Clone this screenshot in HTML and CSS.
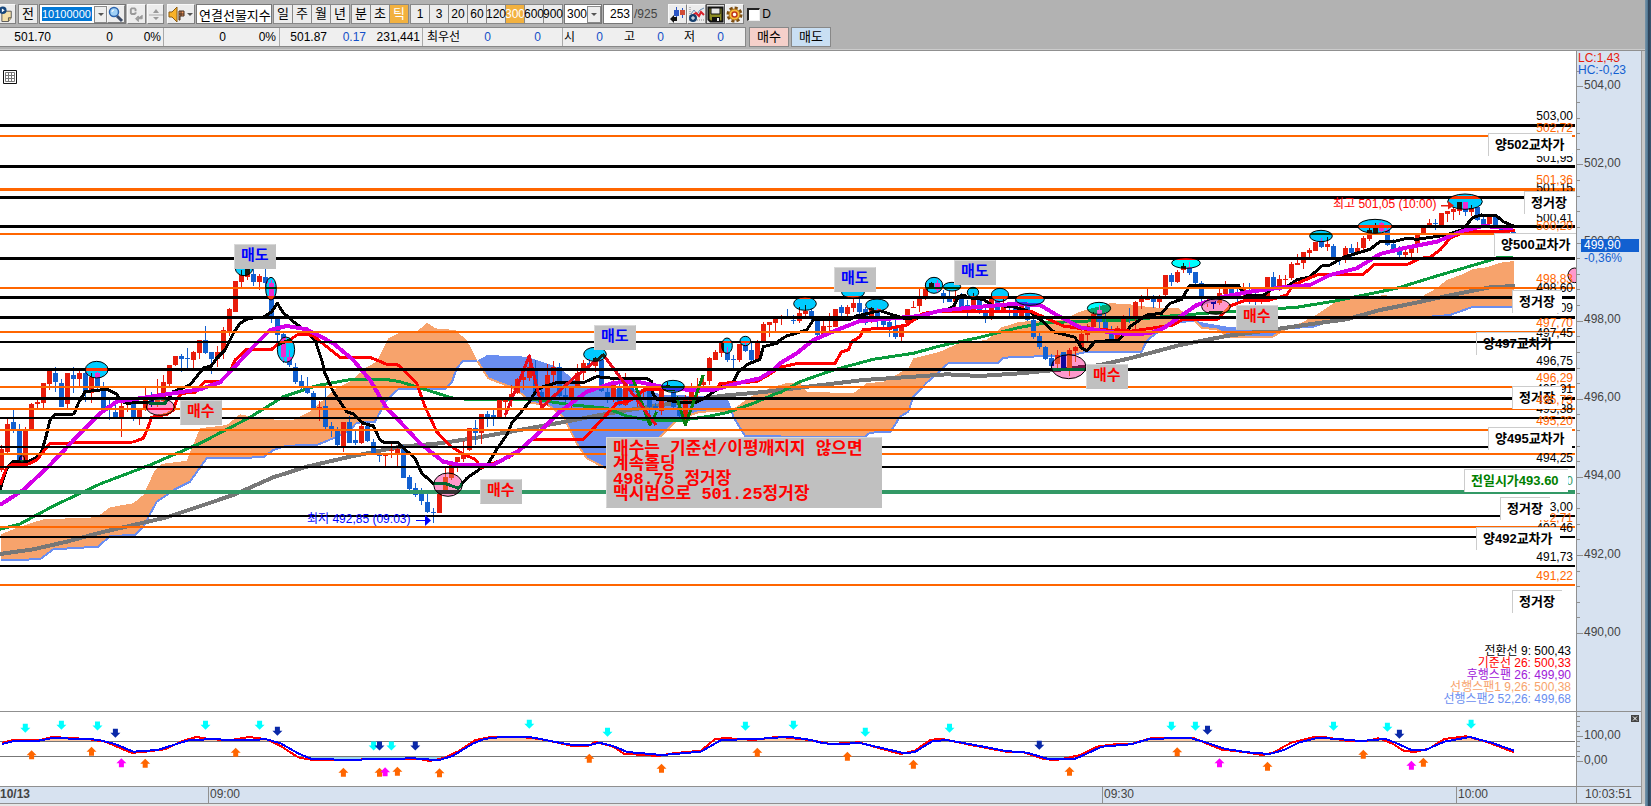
FILE: index.html
```html
<!DOCTYPE html>
<html lang="ko">
<head>
<meta charset="utf-8">
<title>연결선물지수 차트</title>
<link rel="stylesheet" href="styles.css">
</head>
<body>
<div class="app">
<main class="window">
  <div class="toolbar">
    <button class="tool note" type="button" aria-label="메모">
      <svg width="16" height="18" viewBox="0 0 16 18"><path d="M2 6h10v7l-3 4H2z" fill="#f4dfa8" stroke="#555"/><path d="M9 17v-4h3" fill="#d8b860" stroke="#555"/><circle cx="3" cy="5" r="4" fill="#17477d"/><path d="M2 3v4l3-2z" fill="#fff"/></svg>
    </button>
    <button class="tool prev" type="button">전</button>
    <div class="code-box">
      <input class="code" aria-label="종목코드" value="10100000">
      <button class="drop" type="button" aria-label="목록"></button>
      <button class="tool find" type="button" aria-label="검색">
        <svg width="16" height="17" viewBox="0 0 16 17"><path d="M9 10l5 5" stroke="#3b4a66" stroke-width="3"/><circle cx="6" cy="6" r="4.500" fill="#9fd0f6" stroke="#2a62ac" stroke-width="1.500"/><path d="M4 6a2 2 0 0 1 2-2" stroke="#fff" fill="none"/></svg>
      </button>
    </div>
    <button class="tool repeat" type="button" aria-label="되돌리기">
      <svg width="18" height="17" viewBox="0 0 18 17"><path d="M8 5V3L7 2H4L3 3v4l1 1h3l1-1V6" fill="none" stroke="#999" stroke-width="2"/><path d="M15 9v4H9M11 10l-3 3 3 3z" fill="#999" stroke="#999"/></svg>
    </button>
    <button class="tool spin" type="button" aria-label="이전 다음">
      <svg width="14" height="17" viewBox="0 0 14 17"><path d="M7 3l3 4H4zM7 14l3-3H4z" fill="#999"/><path d="M0 9h14" stroke="#aaa"/></svg>
    </button>
    <button class="tool sound" type="button" aria-label="소리">
      <svg width="26" height="17" viewBox="0 0 26 17"><path d="M1 6h3l5-5v15l-5-5H1z" fill="#f9b228" stroke="#8a5a13"/><path d="M11 5h5v5h-4v4h-1zM13 5v5M11 8h5" fill="#f19b62" stroke="#442c1c"/><path d="M19 7h6l-3 3z" fill="#555"/></svg>
    </button>
    <input class="name" aria-label="종목명" value="연결선물지수">
    <div class="group">
      <button type="button">일</button><button type="button">주</button><button type="button">월</button><button type="button">년</button>
    </div>
    <div class="group">
      <button type="button">분</button><button type="button">초</button><button class="on" type="button">틱</button>
    </div>
    <div class="group digits">
      <button type="button">1</button><button type="button">3</button><button type="button">20</button><button type="button">60</button><button type="button">120</button><button class="on" type="button">300</button><button type="button">600</button><button type="button">900</button>
    </div>
    <div class="tick-box">
      <select aria-label="틱 수"><option>300</option></select>
      <span class="drop"></span>
    </div>
    <div class="count"><input id="bars" aria-label="봉 개수" value="253"><label for="bars">/925</label></div>
    <div class="icons">
      <button class="tool" type="button" aria-label="봉 차트">
        <svg width="17" height="17" viewBox="0 0 17 17"><path d="M7.500 1v11M13.500 2v10" stroke="#2b55c5"/><path d="M5 4h5v6H5z" fill="#2b55c5"/><path d="M11 4h5v5h-5z" fill="#cf4b36"/><path d="M1 13l4-4v2h3v4H5v2z" fill="#111"/></svg>
      </button>
      <button class="tool" type="button" aria-label="지표 추가">
        <svg width="17" height="17" viewBox="0 0 17 17"><path d="M2 1v14M1 14h15" stroke="#888" stroke-dasharray="1 1"/><path d="M3 8l3-4 3 4 3-4 4-2" fill="none" stroke="#6b8fb5"/><path d="M5 9l3-2 3 3 2-4 3 3" fill="none" stroke="#d9202a" stroke-width="2"/><circle cx="5" cy="12" r="4" fill="#15406f"/><path d="M3 12h4M5 10v4" stroke="#fff"/></svg>
      </button>
      <button class="tool pressed" type="button" aria-label="저장">
        <svg width="17" height="17" viewBox="0 0 17 17"><path d="M1.500 1.500h14v14h-12l-2-2z" fill="#8b8b22" stroke="#111" stroke-width="2"/><path d="M4 2h9v6H4z" fill="#e8e8e8" stroke="#111"/><path d="M5 11h8v5H5z" fill="#111"/><path d="M10 12h2v3h-2z" fill="#eee"/></svg>
      </button>
      <button class="tool" type="button" aria-label="설정">
        <svg width="17" height="17" viewBox="0 0 17 17"><circle cx="8.500" cy="8.500" r="6.500" fill="none" stroke="#7a4c10" stroke-width="3" stroke-dasharray="3 2"/><circle cx="8.500" cy="8.500" r="5.500" fill="#f8bd38" stroke="#a86b18"/><circle cx="8.500" cy="8.500" r="2.500" fill="#fff" stroke="#c03a1e" stroke-width="1.500"/></svg>
      </button>
    </div>
    <label class="daily"><input type="checkbox">D</label>
  </div>

  <div class="quote-row">
    <div class="quotes">
      <div class="cells total"><span>501.70</span><span>0</span><span>0%</span></div>
      <div class="cells change"><span>0</span><span>0%</span></div>
      <div class="cells last"><span>501.87</span><span class="blue">0.17</span><span>231,441</span></div>
      <div class="cells best"><span>최우선</span><span class="blue">0</span><span class="blue">0</span></div>
      <div class="cells ohlc"><span>시</span><span class="blue">0</span><span>고</span><span class="blue">0</span><span>저</span><span class="blue">0</span></div>
    </div>
    <button class="order buy" type="button">매수</button>
    <button class="order sell" type="button">매도</button>
  </div>

  <section class="chart">
    <div class="plot" id="plot">
      <svg class="canvas" id="canvas" viewBox="0 51 1576 735" preserveAspectRatio="none" role="img" aria-label="연결선물지수 300틱 차트"></svg>
      <button class="grid-button" type="button" aria-label="표 보기">
        <svg width="14" height="14" viewBox="0 0 14 14"><path d="M.5.5h13v13H.5z" fill="#fff" stroke="#111"/><path d="M2.500 2.500h9v9h-9zM5.500 2v10M8.500 2v10M2 5.500h10M2 8.500h10" fill="none" stroke="#777"/></svg>
      </button>
      <ul class="legend">
        <li class="conv">전환선 9: 500,43</li>
        <li class="base">기준선 26: 500,33</li>
        <li class="lag">후행스팬 26: 499,90</li>
        <li class="span1">선행스팬1 9,26: 500,38</li>
        <li class="span2">선행스팬2 52,26: 499,68</li>
      </ul>
    </div>
    <div class="axis" id="axis">
      <button class="close" type="button" aria-label="닫기"><svg width="8" height="7" viewBox="0 0 8 7"><path d="M2 1.500l4 4M6 1.500l-4 4" stroke="#fff"/></svg></button>
    </div>
    <div class="times" id="times"></div>
    <div class="clock">10:03:51</div>
  </section>
  <div class="status"></div>
</main>
<div class="edge"></div>
</div>
<script src="chart.js"></script>
</body>
</html>
```

FILE: styles.css
```css
* { box-sizing: border-box; }

body {
  margin: 0;
  background: #b2b2b2;
  color: #000;
  font: 12px/16px "Liberation Sans", "Noto Sans CJK KR", sans-serif;
}

button, input, select {
  margin: 0;
  padding: 0;
  border: 0;
  border-radius: 0;
  color: inherit;
  font: inherit;
}

.app { display: flex; height: 100vh; overflow: hidden; }
.window { display: flex; flex: 1; flex-direction: column; min-width: 0; }
.edge { width: 6px; background: linear-gradient(90deg, #7894a8, #557c98 40%, #2b3f55 60%, #3a5873); }

/* toolbar */
.toolbar { display: flex; align-items: center; gap: 1px; height: 27px; padding-top: 1px; }
.toolbar > * { flex: none; }
.tool {
  display: flex;
  align-items: center;
  justify-content: center;
  height: 20px;
  background: #ececec;
  border: 1px solid #808080;
  border-top-color: #f8f8f8;
  border-left-color: #f8f8f8;
}
.note { width: 16px; margin-right: 1px; border-left: 0; }
.prev { width: 20px; border-color: #888; font-size: 13px; }
.code-box { display: flex; align-items: center; width: 87px; height: 20px; padding-left: 2px; background: #fff; border: 1px solid #777; }
.code { width: 50px; height: 14px; margin-right: 2px; background: #0078d7; color: #fff; font-size: 11px; }
.drop { display: flex; align-items: center; justify-content: center; width: 14px; height: 17px; background: #eee; border: 1px solid #888; }
.drop::after { content: ""; border: 3px solid transparent; border-top-color: #555; border-bottom: 0; }
.find { width: 18px; height: 18px; }
.repeat { width: 19px; }
.spin { width: 17px; margin-right: 2px; }
.sound { width: 28px; }
.name { width: 76px; height: 20px; padding-left: 2px; background: #fff; border: 1px solid #777; font-size: 13px; }
.group { display: flex; height: 20px; border: 1px solid #888; font-size: 13px; }
.group.digits { font-size: 12px; }
.group button { display: flex; align-items: center; justify-content: center; width: 19px; background: #ececec; border-right: 1px solid #888; }
.group button:last-child { width: 18px; border-right: 0; }
.group .on { background: #f2b13f; color: #fff; }
.tick-box, .count { display: flex; align-items: center; height: 20px; }
.tick-box { width: 38px; background: #fff; border: 1px solid #777; }
.tick-box select { width: 22px; padding-left: 2px; background: #fff; appearance: none; }
.count input { width: 30px; height: 20px; padding-right: 2px; background: #fff; border: 1px solid #777; text-align: right; }
.count label { padding-left: 1px; color: #444; }
.icons { display: flex; margin-left: 10px; }
.icons .tool { width: 19px; }
.icons .pressed { background: #ddd; border-color: #555; }
.daily { display: flex; align-items: center; gap: 2px; margin-left: 2px; }
.daily input { width: 13px; height: 13px; background: #fff; border: 1px solid #eee; border-top: 2px solid #222; border-left: 2px solid #222; appearance: none; }

/* quote row */
.quote-row { display: flex; gap: 2px; height: 24px; padding-bottom: 4px; border-bottom: 1px solid #909090; box-shadow: inset 0 -1px #ccc; }
.quotes { display: flex; height: 20px; background: #efefef; border: 1px solid #888; border-left: 0; }
.cells { display: grid; align-items: center; text-align: right; border-right: 1px solid #aaa; }
.cells:last-child { border-right: 0; }
.total { grid-template-columns: 51px 62px 48px 2px; }
.change { grid-template-columns: 62px 50px 3px; }
.last { grid-template-columns: 47px 39px 54px 2px; }
.best { grid-template-columns: 37px 31px 50px 21px; }
.ohlc { grid-template-columns: 12px 28px 32px 29px 31px 29px 21px; }
.blue { color: #1450c8; }
.order { width: 40px; height: 20px; border: 1px solid #888; font-size: 13px; }
.buy { margin-left: 1px; background: #f5d0ca; }
.sell { background: #c9dff3; }

/* chart */
.chart {
  display: grid;
  flex: 1;
  grid-template: 1fr 18px / 1fr 65px;
  min-height: 0;
  margin-right: 4px;
  background: #d7e2f0;
  box-shadow: 1px 0 #999, 4px 0 #c8c8c8;
}
.plot, .axis, .times { position: relative; min-width: 0; min-height: 0; }
.plot { overflow: hidden; background: #fff; }
.canvas { position: absolute; inset: 0; width: 100%; height: 100%; isolation: isolate; }
.grid-button { position: absolute; top: 19px; left: 3px; width: 14px; height: 14px; }
.grid-button svg, .close svg { display: block; }
.axis { border-left: 1px solid #909090; }
.times { border-top: 1px solid #909090; border-bottom: 1px solid #909090; color: #444; }
.clock { padding-left: 8px; border: 1px solid #909090; border-right: 0; color: #444; line-height: 15px; }
.status { height: 2px; background: #e6e6e6; }

.price { position: absolute; right: 3px; margin-top: -8px; }
.orange { color: #ff6600; }
.green { color: #339966; }
.black { color: #000; }

.callout { position: absolute; height: 23px; padding: 3px 0 0 6px; background: #fff; border-top: 1px solid #ccc; border-left: 1px solid #ccc; font-weight: bold; font-size: 13px; white-space: nowrap; }
.callout.clear { background: none; }
.callout.open { color: #008000; }

.memo { position: absolute; padding: 3px 6px; background: #c0c0c0; border: 1px solid #d8d8d8; border-right-color: #c0c0c0; border-bottom-color: #c0c0c0; font: bold 15px/17px "Liberation Mono", "Noto Sans CJK KR", monospace; white-space: pre; }
.memo.buy-note { color: #ff0000; }
.memo.sell-note { color: #0000ff; }
.memo.long { width: 276px; height: 71px; padding: 4px 6px; color: #ff0000; font-size: 17px; line-height: 15px; }

.extreme { position: absolute; margin-top: -8px; white-space: nowrap; }
.extreme.high { color: #ff0000; }
.extreme.low { color: #0000ff; }

.legend { position: absolute; right: 5px; bottom: 81px; margin: 0; padding: 0; list-style: none; text-align: right; line-height: 12px; }
.base { color: #ff0000; }
.lag { color: #a020d8; }
.span1 { color: #f7a36c; }
.span2 { color: #6a8ef0; }

.tick { position: absolute; left: 0; width: 3px; height: 1px; background: #909090; }
.tick.major { width: 6px; }
.scale { position: absolute; left: 7px; margin-top: -8px; color: #444; }
.scale.top-note { left: 1px; line-height: 12px; }
.scale.up { color: #e81c0c; }
.scale.down { color: #1260d0; }
.scale.now { left: 4px; right: 2px; margin-top: -6px; padding-left: 3px; background: #1260d0; color: #fff; line-height: 13px; }
.split { position: absolute; left: 0; right: 0; height: 1px; background: #909090; }
.close { position: absolute; right: 2px; bottom: 64px; width: 8px; height: 7px; background: #444; }
.time { position: absolute; top: 0; bottom: 0; padding-left: 1px; border-left: 1px solid #909090; line-height: 15px; }
.time.day { padding-left: 0; border-left: 0; font-weight: bold; }
```

FILE: chart.js
```js
// Coordinates in the data strings are thirds of a unit, relative to each block's origin.
const W = 1576, TOP = 51, H = 735;
const canvas = document.getElementById('canvas');
const plot = document.getElementById('plot');
const axis = document.getElementById('axis');
const NS = 'http://www.w3.org/2000/svg';

function shape(tag, attrs) {
  const el = document.createElementNS(NS, tag);
  for (const key in attrs) el.setAttribute(key, attrs[key]);
  canvas.appendChild(el);
  return el;
}

// Joins blocks [originX, originY, "x,y x,y", xUnit] into one series running left to right.
function series(blocks) {
  const out = [];
  blocks.forEach(([ox, oy, text, unit = 3], i) => {
    const limit = i + 1 < blocks.length ? blocks[i + 1][0] : Infinity;
    text.trim().split(/\s+/).forEach(p => {
      const [x, y] = p.split(',').map(Number);
      const px = ox + x / unit;
      if (px < limit) out.push([+px.toFixed(1), +(oy + y / 3).toFixed(1)]);
    });
  });
  return out;
}
const join = pts => pts.map(p => p.join(',')).join(' ');
function line(color, width, pts, crisp = true) {
  shape('polyline', { points: join(pts), fill: 'none', stroke: color, 'stroke-width': width, 'stroke-linejoin': 'round', 'shape-rendering': crisp ? 'crispEdges' : 'auto' });
}

shape('rect', { x: 0, y: TOP, width: W, height: H, fill: '#fff' });

// Ichimoku clouds
const ORANGE = '#f7a36c', BLUE = '#6a8ef0';
const clouds = [
  { fill: ORANGE, edge: BLUE,
    top: [[0,230,'4,912 60,890 130,868 290,862 330,832 400,820 430,795 465,720 485,702 560,692 600,595 680,585 720,553 800,568 880,570 930,545 975,505 1000,480 1050,455 1100,412 1130,395 1165,325 1199,308'],[400,300,'0,95 50,95 82,68 105,85 165,90 200,120 232,182']],
    bottom: [[0,230,'4,990 120,988 160,958 295,950 330,918 405,915 430,890 470,815 525,778 570,755 620,685 790,682 820,660 860,647 950,645 1000,625 1050,600 1070,578 1125,575 1160,510 1195,478'],[400,300,'0,268 135,266 155,248 170,205 190,182 232,182']] },
  { fill: BLUE, edge: ORANGE,
    top: [[400,300,'232,182 262,165 380,170 440,190 480,205 550,262 740,270 790,285 920,288 960,283 980,290 995,332']],
    bottom: [[400,300,'232,182 265,235 330,260 370,285 395,310 440,312 490,350 510,390 530,430 560,475 618,505 700,505 780,412 830,360 870,345 900,335 995,332']] },
  { fill: ORANGE, edge: BLUE,
    top: [[400,300,'992,332 1060,285 1110,265 1139,255'],[780,240,'0,435 25,428 60,428 80,455 220,460 260,430 310,425 385,385 400,355 480,335 540,308 620,300 665,262 720,245 850,240 900,215 990,190 1049,192'],[1130,170,'0,403 60,412 145,415 195,452']],
    bottom: [[400,300,'975,288 992,325 1000,350 1035,408 1139,408'],[780,240,'0,590 255,590 270,578 332,575 360,530 385,515 400,470 440,428 505,370 655,368 670,353 880,345 920,335 1049,335'],[1130,170,'0,545 35,545 50,512 120,458 160,455 195,452']] },
  { fill: BLUE, edge: ORANGE,
    top: [[1130,170,'195,452 230,460 290,470 400,470 470,472']],
    bottom: [[1130,170,'195,452 215,473 260,478 300,502 425,502 470,475']] },
  { fill: ORANGE, edge: BLUE,
    top: [[1130,170,'470,475 510,460 555,437 610,400 640,388 710,385 760,375 860,388 920,355 950,330 1000,312 1030,297 1070,292 1110,278 1152,273']],
    bottom: [[1130,170,'470,475 550,470 580,460 620,445 900,440 960,435 1030,410 1152,410']] }
];
clouds.forEach(c => {
  const top = series(c.top), bottom = series(c.bottom);
  shape('polygon', { points: join(top.concat(bottom.slice().reverse())), fill: c.fill, 'shape-rendering': 'crispEdges' });
  line(c.edge, 2, bottom);
});

// Moving averages
line('#777', 4, series([
  [0,230,'0,972 100,958 200,935 300,908 400,885 500,862 700,795 820,742 920,710 1050,680 1140,662'],
  [400,300,'0,440 120,430 220,415 360,390 480,368 600,345 700,328 850,305 960,288 1100,275'],
  [780,240,'0,450 100,438 250,420 400,410 500,403 600,408 720,400 850,388 960,375'],
  [1130,170,'0,565 150,525 290,498 400,483 560,460 650,448 750,420 850,400 950,378 1080,352 1155,348']]));
line('#0a9b3d', 3, series([
  [0,230,'0,898 60,882 160,828 300,762 450,705 600,640 750,562 850,500 950,467 1060,447 1150,447'],
  [400,300,'0,245 80,270 160,295 240,300 400,298 520,315 620,325 680,348 740,360 850,360 920,350 980,338 1060,310 1130,280'],
  [780,240,'0,458 60,425 160,390 280,358 400,340 480,318 600,292 720,262 800,248 1000,240'],
  [1130,170,'0,450 130,437 250,428 500,412 620,392 800,355 920,318 1090,268 1110,260 1150,259']]));

// Candles: colour, high, top, bottom, low
const candles = [
  [1.7, 230, `r645,657,720,725 r565,583,665,668 b540,577,598,608 b582,597,690,692 r592,597,690,700 r520,523,597,600 r510,517,523,540 r458,460,518,535 r420,423,461,480 b412,430,457,487 b447,460,530,530 r428,430,523,535 b410,435,448,490 r422,430,448,470 b425,430,486,515 r430,440,490,518 b425,430,475,478 b455,475,533,540 b510,525,541,570 b520,546,561,561 r515,528,561,620 r505,515,522,545 b510,517,561,572 r535,540,561,584 r472,510,541,543 b485,497,525,530 r448,510,525,530 r435,455,512,515 r405,406,461,468 r377,379,406,408 b373,378,387,425 b354,383,388,420 r363,366,389,418 r330,331,368,388 b288,330,368,372 b366,366,386,432 r348,366,386,412 r290,300,362,387 r235,238,303,318 r153,153,245,245 r120,136,156,172 r115,118,142,150 b112,132,156,168 r132,137,156,180 b110,141,160,170 b150,158,258,278 b260,265,315,350 b310,312,380,400 b360,380,405,412 b400,412,455,462 b435,453,470,480 b440,468,490,492 b483,489,534,540 r512,530,536,572 b470,528,590,597 b575,587,597,620 b590,600,644,650 r575,577,648,665 b558,576,638,640 b600,630,638,644 r575,588,640,642 b575,587,632,636 b628,635,668,674 b668,674,678,695 r675,675,679,708 r640,660,663,683 r655,657,674,708 b645,656,743,743`],
  [409.3, 300, `b525,530,566,570 b550,565,585,590 b565,575,602,615 b570,606,637,640 b625,636,639,668 r575,578,638,640 r503,530,572,575 r483,485,535,540 r470,472,486,515 r422,460,478,485 r383,385,449,452 b360,385,398,436 r343,343,398,432 b333,342,352,380 b330,346,350,378 r298,300,350,354 r298,300,306,350 r255,281,298,320 r235,237,280,282 r215,230,241,270 r168,200,233,243 b180,208,283,285 b265,276,292,325 r192,226,290,318 r183,202,226,255 b190,200,288,300 b262,285,292,306 r262,263,290,328 r192,218,257,258 r180,188,220,240 b178,188,196,198 r170,175,198,215 b178,180,274,276 b262,275,295,308 r232,243,292,306 b220,258,314,318 r220,238,314,318 b235,237,277,285 r258,272,277,322 r265,267,276,290 b266,266,322,345 b310,318,325,335 r262,273,332,345 r245,255,262,270 b270,277,322,330 b300,320,348,355 r285,300,353,375 r248,270,308,320 r235,258,278,292 r225,245,256,262 r172,174,244,256 r150,155,179,179 r130,130,158,170 b140,160,180,186 b166,177,180,203 r132,132,180,185 b125,136,153,155 b130,150,180,182 r120,122,180,180 r66,72,123,125 r66,66,76,112 r56,56,70,95 r45,55,58,75 b27,48,52,56 b45,60,64,73 r20,40,62,68 r15,33,42,55 b28,33,54,60`],
  [817.3, 240, `b236,237,285,290 r240,258,285,290 r220,257,261,277 r207,208,262,262 b195,201,220,230 r196,201,221,235 r172,190,203,215 b178,188,217,228 b200,208,248,255 r200,205,243,250 b205,210,228,260 b230,233,256,270 b240,246,262,290 b232,257,291,296 r258,260,291,304 r207,208,248,258 r183,200,203,203 r145,178,198,215 r130,148,170,180 r125,128,142,145 b120,130,150,155 b150,158,168,190 b150,178,185,186 r150,178,186,200 b160,175,202,210 b180,195,208,232 r160,170,211,212 b170,175,216,222 b200,213,228,248 r170,178,230,240 b180,183,210,212 r170,192,209,210 b190,195,202,228 b178,190,230,232 r190,195,228,230 b185,195,240,243 b238,240,291,297 b278,287,320,327 b318,320,356,360 b342,353,378,385 r330,345,372,385 b335,337,385,387 r325,330,385,408 r318,320,333,366 r265,282,325,327 r252,258,285,308 r215,222,260,263 b195,210,247,280 b215,247,272,275 b258,280,297,308 r258,264,297,305 r225,238,267,268 b205,233,238,248 r183,185,232,280 r165,178,186,208 r145,175,180,180 b165,167,186,205 r165,167,186,203 r105,106,165,168 b100,105,126,138`],
  [1177.3, 170, `r300,307,335,340 r280,288,300,310 b275,290,308,314 b306,307,340,343 b333,340,388,392 r378,390,400,410 b385,392,402,418 r358,370,400,405 r333,345,372,378 b345,347,375,380 b355,380,384,405 r340,352,375,380 b340,362,396,402 b368,378,382,404 r372,383,390,402 r320,322,380,382 b306,321,350,352 r316,328,352,362 r315,327,331,345 r277,282,324,330 r252,280,284,286 r245,247,280,297 r235,240,248,260 r215,217,242,243 b205,212,230,235 r200,222,230,242 b222,228,262,268 b262,262,264,284 r228,234,262,278 b222,235,248,262 r215,235,249,252 r198,204,235,240 r175,179,206,212 r160,165,188,190 b155,160,182,185 b170,180,224,228 b208,222,236,240 b228,235,254,262 r235,246,254,262 r225,228,250,262 r192,195,232,248 r170,172,190,195 r147,160,164,172 b147,158,163,180 r128,130,165,168 r122,124,132,156 r110,118,126,150 r95,95,122,135 b95,95,125,138 r105,115,125,138 b110,112,150,152 b132,147,162,165 r135,140,163,172 b135,136,168,170 b165,168,190,190 r180,183,188,195 b184,186,190,192`]
];
candles.forEach(([x0, y0, text]) => {
  text.split(' ').forEach((entry, i) => {
    const fill = entry[0] === 'r' ? '#e81c0c' : '#1260d0';
    const [high, top, bottom, low] = entry.slice(1).split(',').map(v => Math.round(y0 + v / 3));
    const x = Math.round(x0 + i * 6 - 0.5);
    shape('rect', { x, y: high, width: 1, height: Math.max(1, low - high), fill });
    shape('rect', { x: x - 2, y: top, width: 5, height: Math.max(1, bottom - top), fill });
  });
});

line('#000', 3, series([
  [0,230,'0,785 4,765 20,715 38,695 85,695 110,682 125,665 138,620 150,570 165,553 222,552 235,520 255,485 320,478 350,492 360,512 380,520 425,517 460,520 495,520 520,485 570,465 612,412 632,410 650,385 675,360 700,310 720,280 745,265 790,262 815,245 832,220 850,248 880,275 900,290 945,330 965,390 975,430 1000,485 1040,545 1060,552 1090,580 1120,588 1140,630 1155,638 1195,638'],
  [400,300,'0,435 45,475 65,520 100,550 140,552 175,565 200,535 240,507 265,490 290,448 320,405 335,370 385,310 410,270 430,260 470,248 550,248 590,230 640,235 740,235 755,245 758,280 770,298 800,300 830,306 890,306 920,290 960,262 1000,245 1015,215 1045,192 1080,178 1090,140 1130,130'],
  [780,240,'0,300 20,288 80,270 100,240 210,238 230,228 300,212 370,235 410,236 435,220 500,210 520,200 535,170 550,165 565,173 610,178 635,195 700,200 750,215 760,225 790,245 820,275 885,292 905,325 920,332 945,305 1015,300 1040,275'],
  [1130,170,'0,470 50,435 95,430 120,400 155,388 180,345 325,345 345,375 400,376 430,355 470,350 500,330 540,320 575,288 600,285 640,262 720,238 750,215 790,215 830,205 860,208 950,195 995,180 1030,142 1055,135 1100,138 1120,155 1150,168']]));
line('#ff0000', 3, series([
  [0,230,'0,765 20,712 40,703 85,702 110,690 150,640 400,636 430,625 445,590 455,562 500,553 520,540 530,510 545,490 585,487 615,455 665,453 690,425 705,390 740,358 815,358 830,345 870,330 890,315 920,313 940,318 1020,382 1110,382 1160,403 1190,403'],
  [400,300,'0,200 50,250 75,320 110,395 150,437 185,460 225,478 245,503 280,490 330,470 395,418 550,418 600,365 650,310 690,302 735,268 800,268 950,270 960,250 1070,245 1110,222'],
  [780,240,'0,382 55,370 165,370 185,335 205,330 215,305 240,290 250,268 330,265 380,255 430,220 500,213 750,213 800,235 850,258 920,268 1045,272'],
  [1130,170,'0,484 130,465 160,447 265,447 300,408 340,393 420,390 470,375 490,345 560,315 700,313 735,282 835,282 870,265 900,262 930,240 960,205 1000,187 1155,182']]));
const lagging = series([
  [0,230,'0,825 70,780 150,705 250,600 300,550 350,515 420,505 500,493 600,478 660,457 700,415 760,350 810,300 860,288 920,298 1000,340 1060,390 1110,450 1160,535'],
  [400,300,'0,365 60,430 130,485 180,495 280,495 360,450 420,395 480,335 560,275 640,248 710,245 800,263 870,270 940,270 1020,248 1080,235 1120,210'],
  [780,240,'0,370 50,340 100,300 170,270 240,243 340,235 420,228 480,212 580,202 700,192 780,195 830,225 900,262 980,275 1045,283'],
  [1130,170,'0,492 60,490 100,475 150,440 200,405 280,380 360,365 460,352 540,345 600,315 680,295 750,252 820,235 920,215 1000,182 1060,168 1150,175']]);
line('#f0b000', 2, lagging.map(([x, y]) => [x, y - 1]));
line('#d400e8', 4, lagging);

// Hand-drawn trend strokes
line('#0a8010', 3, series([[400,300,'700,240 750,375 770,335']]));
line('#0a8010', 3, series([[400,300,'830,290 856,375 910,225']]));
line('#e80c1c', 3, series([[400,300,'316,345 388,168 425,322 520,235 610,165 768,375']]));

// Horizontal levels: y, thickness
const levels = {
  '#000': [[125.5,3],[166.5,3],[197.5,3],[226.5,3],[258.5,3],[297.5,3],[317.5,3],[342,2],[369.5,3],[398.5,3],[418,2],[447,2],[467,2],[516,2],[537,2],[566,2]],
  '#ff6600': [[136,2],[189.5,3],[234,2],[288,2],[332,2],[387,2],[409,2],[430,2],[454,2],[527,2],[585,2]],
  '#339966': [[492,4]]
};
for (const color in levels) {
  levels[color].forEach(([y, t]) => shape('rect', { x: 0, y: y - t / 2, width: W - 1, height: t, fill: color }));
}

// Ellipse markers invert what lies under them
const marks = { sky: '#ff3300', aqua: '#ff0000', pink: '#006633' };
[
  [0,230,'sky',290,419,34,25],[0,230,'sky',732,115,26,22],[0,230,'sky',813,176,16,34],[0,230,'sky',858,359,26,38],
  [0,230,'pink',481,531,42,25],[0,230,'pink',66,687,8,10],
  [400,300,'sky',585,163,34,21],[400,300,'sky',819,259,34,18],[400,300,'sky',981,137,16,23],[400,300,'sky',1036,123,16,14],
  [400,300,'sky',1215,11,34,20],[400,300,'pink',144,554,43,35],
  [780,240,'sky',219,158,34,16],[780,240,'sky',291,195,34,18],[780,240,'sky',462,136,26,24],[780,240,'sky',516,140,26,13],
  [780,240,'sky',579,157,17,15],[780,240,'sky',660,165,26,20],[780,240,'sky',750,178,43,18],[780,240,'aqua',957,205,35,18],
  [780,240,'pink',866,380,52,36],
  [1130,170,'aqua',168,279,43,16],[1130,170,'sky',573,198,34,17],[1130,170,'sky',735,169,51,21],[1130,170,'sky',1005,95,52,23],
  [1130,170,'pink',258,410,43,23],[1400,40,'pink',524,706,20,22]
].forEach(([ox, oy, kind, x, y, rx, ry]) => {
  const box = { cx: ox + x / 3, cy: oy + y / 3, rx: rx / 3, ry: ry / 3 };
  shape('ellipse', { ...box, fill: marks[kind], style: 'mix-blend-mode:difference' });
  shape('ellipse', { ...box, fill: 'none', stroke: '#000', 'stroke-width': 1 });
});
shape('path', { d: 'M416 520h9v-5l6 5.500-6 5.500v-5h-9z', fill: '#0000ff' });
shape('path', { d: 'M1441 205h7v-4l6 4.500-6 4v-3h-7z', fill: '#e81c0c' });

// Oscillator
shape('rect', { x: 0, y: 711, width: W, height: 1, fill: '#909090' });
const U = 2.851, V = 2.746;
const slow = series([
  [0,700,'5,132 40,123 110,122 150,114 210,116 280,119 330,133 380,155 450,150 500,133 540,120 600,118 700,120 760,118 800,130 850,160 890,178 1010,179 1130,176 1180,175 1250,181 1290,168 1350,130 1380,117 1430,111 1510,111 1560,121',U],
  [550,700,'0,123 60,134 110,136 140,128 180,138 220,156 320,165 430,155 490,119 580,118 680,110 740,119 780,130 830,133 880,128 950,145 1010,160 1040,156 1090,124 1130,120 1200,133 1300,153 1360,158 1420,177 1495,177',U],
  [1080,700,'0,170 60,140 140,133 190,117 300,113 345,127 400,147 460,157 520,162 560,150 600,128 650,114 700,116 770,123 840,117 870,130 910,150 950,149 1000,125 1070,111 1130,128 1192,152',V]]);
const fast = series([
  [0,700,'5,128 35,121 110,121 150,111 250,117 300,125 340,143 375,158 400,157 470,148 520,123 560,111 600,118 660,120 710,111 760,118 800,138 850,172 890,180 1010,179 1120,176 1190,176 1225,183 1265,174 1310,152 1355,120 1400,111 1450,110 1510,113 1560,121',U],
  [550,700,'0,123 60,137 110,137 130,126 180,140 210,161 310,168 350,160 430,152 470,118 500,114 580,120 650,110 740,120 800,132 880,127 950,148 1000,162 1040,152 1085,119 1120,117 1200,135 1300,155 1350,157 1400,175 1440,181 1490,170',U],
  [1080,700,'0,165 45,140 100,132 140,132 200,113 260,115 310,113 350,132 390,149 450,156 500,165 530,158 580,128 640,112 670,111 730,122 780,124 820,115 860,132 890,153 920,156 960,145 1000,117 1060,109 1110,123 1192,157',V]]);
// Overbought and oversold tints between the curve and its bound
const defs = shape('defs', {});
defs.innerHTML = '<clipPath id="over"><path d="M0 711h1576v30H0z"/></clipPath><clipPath id="under"><path d="M0 756h1576v30H0z"/></clipPath>';
shape('polygon', { points: `0,741 ${join(slow)} 1514,741`, fill: '#fbc9a4', 'clip-path': 'url(#over)' });
shape('polygon', { points: `0,756 ${join(slow)} 1514,756`, fill: '#9fd8ee', 'clip-path': 'url(#under)' });
[741, 756].forEach(y => shape('rect', { x: 0, y, width: W - 1, height: 1, fill: '#777' }));
line('#ff0000', 2, fast);
line('#0000ff', 2, slow);

const arrows = [
  ['#00ffff', 1, 0, U, '72,85 175,76 278,78 586,76 740,76 1065,138 1116,138 1509,73'],
  ['#0a28a8', 1, 0, U, '329,100 791,94 1082,138 1184,138'],
  ['#ff6600', -1, 0, U, '90,164 261,154 414,190 672,157 979,217 1082,217 1133,214 1253,218'],
  ['#ff00ff', -1, 0, U, '346,188 1098,215'],
  ['#00ffff', 1, 550, U, '164,97 557,79 694,76 899,97 1139,85'],
  ['#0a28a8', 1, 550, U, '1395,136'],
  ['#ff6600', -1, 550, U, '112,175 318,205 591,157 848,169 1036,193 1481,214'],
  ['#00ffff', 1, 1080, V, '251,79 317,79 696,79 844,82 1074,73'],
  ['#0a28a8', 1, 1080, V, '350,91 877,103'],
  ['#ff6600', -1, 1080, V, '267,155 515,199 778,163 943,187'],
  ['#ff00ff', -1, 1080, V, '383,188 910,196']
];
arrows.forEach(([fill, dir, ox, unit, text]) => series([[ox, 700, text, unit]]).forEach(([x, y]) => {
  shape('path', { d: `M${x - 2.5} ${y - 4.5 * dir}h5v${4 * dir}h2.500l-5 ${5 * dir}l-5 ${-5 * dir}h2.500z`, fill });
}));

// Text over the chart
function put(parent, cls, text, x, y) {
  const el = document.createElement('div');
  el.className = cls;
  el.textContent = text;
  if (x !== null) el.style.left = (x / W * 100).toFixed(3) + '%';
  if (y !== null) el.style.top = ((y - TOP) / H * 100).toFixed(3) + '%';
  parent.appendChild(el);
}
[
  ['black','503,00',116],['orange','502,72',128],['black','501,95',158],['black','501,15',188],['orange','501,36',180],
  ['black','500,41',218],['orange','500,20',226],['orange','498,83',279],['black','498,60',288],['black','498,09',308],
  ['orange','497,70',323],['black','497,45',333],['black','496,75',361],['orange','496,29',378],['black','495,91',389],
  ['black','495,38',409],['orange','495,20',421],['black','494,25',458],['green','493,60',481],
  ['black','493,00',507],['orange','492,71',518],['black','492,46',528],['black','491,73',557],['orange','491,22',576]
].forEach(([c, t, y]) => put(plot, 'price ' + c, t, null, y));

[
  ['양502교차가',1488,133,84],['정거장',1524,191,51],['양500교차가',1494,233,82],['정거장',1512,290,50],['양495교차가',1488,427,84],
  ['정거장',1512,386,50],['정거장',1500,497,50],['양492교차가',1476,527,84],['정거장',1512,590,50]
].forEach(([t, x, y, w]) => { put(plot, 'callout', t, x, y); plot.lastChild.style.width = w + 'px'; });
put(plot, 'callout clear', '양497교차가', 1476, 332);
put(plot, 'callout open', '전일시가493.60', 1464, 469);
plot.lastChild.style.width = '104px';
put(plot, 'price orange', '495,73', null, 400);

[[234,244],[594,325],[834,267],[954,260]].forEach(([x, y]) => put(plot, 'memo sell-note', '매도', x, y));
[[180,400],[480,479],[1086,364],[1236,305]].forEach(([x, y]) => put(plot, 'memo buy-note', '매수', x, y));
put(plot, 'memo long', '매수는 기준선/이평깨지지 않으면\n계속홀딩\n498.75 정거장\n맥시멈으로 501.25정거장', 606, 437);
put(plot, 'extreme high', '최고 501,05 (10:00)', 1333, 204);
put(plot, 'extreme low', '최저 492,85 (09:03)', 307, 519);

// Price scale
for (let i = -1; i < 36; i++) {
  const y = 86.4 + i * 15.62;
  if (y > 60 && y < 640) put(axis, i % 5 === 0 ? 'tick major' : 'tick', '', null, y);
}
for (let y = 716; y < 762; y += 5) put(axis, y === 736 || y === 761 ? 'tick major' : 'tick', '', null, y);
['504,00','502,00','500,00','498,00','496,00','494,00','492,00','490,00'].forEach((t, i) => put(axis, 'scale', t, null, 85 + i * 78.1));
put(axis, 'scale', '100,00', null, 735);
put(axis, 'scale', '0,00', null, 760);
put(axis, 'scale top-note up', 'LC:1,43', null, 60);
put(axis, 'scale top-note down', 'HC:-0,23', null, 72);
put(axis, 'scale now', '499,90', null, 245);
put(axis, 'scale down', '-0,36%', null, 258);
put(axis, 'split', '', null, 711);

const times = document.getElementById('times');
put(times, 'time day', '10/13', 0, null);
put(times, 'time', '09:00', 208, null);
put(times, 'time', '09:30', 1102, null);
put(times, 'time', '10:00', 1456, null);
```
